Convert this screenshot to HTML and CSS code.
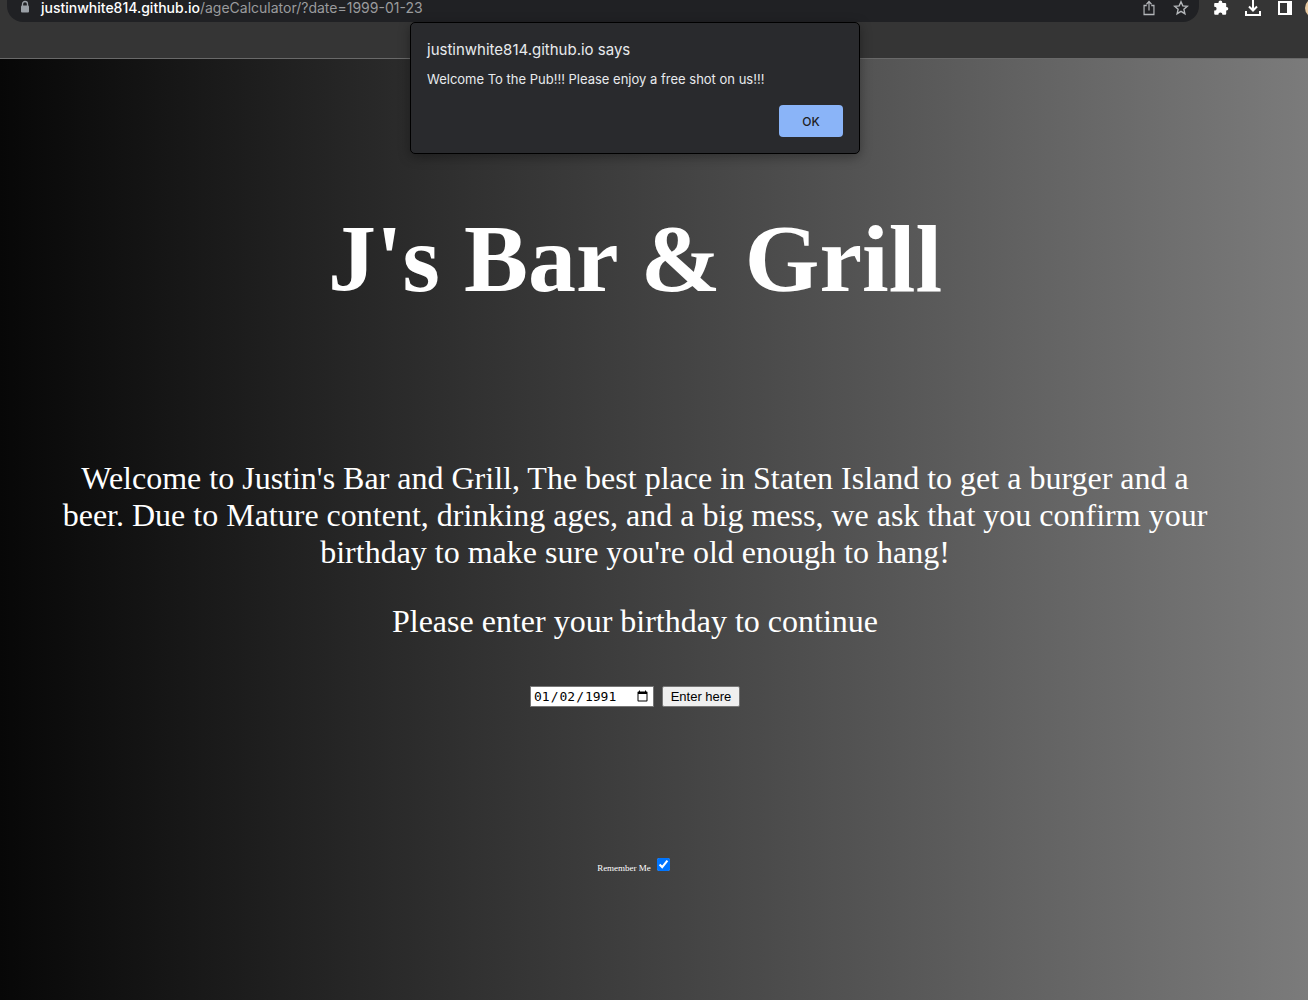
FILE: index.html
```html
<!DOCTYPE html>
<html lang="en">
<head>
<meta charset="utf-8">
<title>J's Bar &amp; Grill</title>
<link rel="stylesheet" href="styles.css">
</head>
<body>
<header class="toolbar">
  <div class="address">
    <svg class="lock" viewBox="0 0 10 14" aria-hidden="true"><path d="M2.5 6V4a2.5 2.5 0 0 1 5 0v2" fill="none" stroke="#9aa0a6" stroke-width="1.3"/><rect x="1" y="5.5" width="8" height="7" rx="1" fill="#9aa0a6"/></svg>
    <span class="url"><span class="host">justinwhite814.github.io</span>/ageCalculator/?date=1999-01-23</span>
    <button class="tool" aria-label="Share"><svg viewBox="0 0 16 16" fill="none" stroke="#b4b7ba" stroke-width="1.3"><path d="M5.5 5.5h-3v9h11v-9h-3M8 10.5V2M5.2 4.3 8 1.5l2.8 2.8" transform="translate(.8)scale(.9 1)"/></svg></button>
    <button class="tool" aria-label="Bookmark"><svg viewBox="0 0 16 16" fill="none" stroke="#b4b7ba" stroke-width="1.4"><path d="m8 1.8 1.8 4.1 4.5.4-3.4 3 1 4.4L8 11.4l-3.9 2.3 1-4.4-3.4-3 4.5-.4z"/></svg></button>
  </div>
  <button class="tool" aria-label="Extensions"><svg viewBox="0 0 16 16" fill="#fff"><path d="M2 3h3.5v-.6a1.9 1.9 0 0 1 3.8 0V3h2.9a1 1 0 0 1 1 1v3h.3a1.8 1.8 0 0 1 0 3.6h-.3v3.2a1 1 0 0 1-1 1H9.4v-.4a2 2 0 0 0-4 0v.4H2.2a1 1 0 0 1-1-1v-3.2h.5a1.9 1.9 0 0 0 0-3.8h-.5V4a1 1 0 0 1 .8-1z"/></svg></button>
  <button class="tool" aria-label="Downloads"><svg viewBox="0 0 16 16" fill="none" stroke="#fff" stroke-width="2"><path d="M8 0v10M4 6.5l4 4 4-4M1 11v4h14v-4"/></svg></button>
  <button class="tool" aria-label="Side panel"><svg viewBox="0 0 16 16"><path d="M1 1h14v14H1zM3 3v10h7V3z" fill="#fff" fill-rule="evenodd"/></svg></button>
  <span class="avatar"></span>
</header>
<main class="page">
  <h1>J's Bar &amp; Grill</h1>
  <p class="intro">Welcome to Justin's Bar and Grill, The best place in Staten Island to get a burger and a beer. Due to Mature content, drinking ages, and a big mess, we ask that you confirm your birthday to make sure you're old enough to hang!</p>
  <form>
    <label class="prompt" for="date">Please enter your birthday to continue</label>
    <div class="entry">
      <input class="date" type="date" id="date" value="1991-01-02">
      <button class="enter" type="button">Enter here</button>
    </div>
    <div class="remember">
      <label for="remember">Remember Me</label>
      <input type="checkbox" id="remember" checked>
    </div>
  </form>
</main>
<section class="dialog" role="alertdialog" aria-labelledby="dialog-title" aria-describedby="dialog-text">
  <h2 id="dialog-title">justinwhite814.github.io says</h2>
  <p id="dialog-text">Welcome To the Pub!!! Please enjoy a free shot on us!!!</p>
  <button class="ok">OK</button>
</section>
</body>
</html>
```
FILE: styles.css
```css
* { box-sizing: border-box; }
body {
  margin: 0;
  min-height: 100vh;
  display: flex;
  flex-direction: column;
  overflow-x: hidden;
  background: #353535;
  color: #fff;
  font-family: "Liberation Serif", "Times New Roman", serif;
}
h1, h2, p { margin: 0; font-weight: normal; }

.toolbar {
  height: 59px;
  flex: none;
  display: flex;
  align-items: flex-start;
  gap: 16px;
  padding-left: 7px;
  overflow: hidden;
  border-bottom: 1px solid #696969;
  font-family: Inter, Roboto, sans-serif;
}
.address {
  flex: 1;
  height: 22px;
  display: flex;
  align-items: flex-start;
  gap: 16px;
  padding: 0 10px 0 13px;
  border-radius: 0 0 16px 16px;
  background: #202124;
}
.lock { width: 10px; height: 14px; }
.url {
  flex: 1;
  margin-left: -5px;
  color: #9a9b9d;
  font-size: 14px;
  line-height: 16px;
  white-space: nowrap;
}
.host { color: #fff; font-weight: 500; }
.tool {
  width: 16px;
  height: 16px;
  padding: 0;
  border: 0;
  background: none;
}
.tool svg { display: block; width: 16px; height: 16px; }
.address + .tool { margin-left: -2px; }
.avatar {
  flex: none;
  width: 20px;
  height: 20px;
  margin: -2px -17px 0 -4px;
  border-radius: 50%;
  background: #e8c9a0;
}

.page {
  flex: 1;
  padding: 142px 98px 120px 60px;
  background: linear-gradient(to right, #070707, #7b7b7b);
  text-align: center;
  font-size: 32px;
  line-height: 37px;
}
.page h1 {
  font-size: 96px;
  line-height: 115px;
  font-weight: bold;
}
.intro { margin-top: 144px; }
.prompt { display: block; margin-top: 32px; }
.entry {
  display: flex;
  justify-content: center;
  gap: 8px;
  margin-top: 46px;
}
.date {
  width: 124px;
  height: 21px;
  padding: 0 2px;
  border: 1px solid #767676;
  background: #fff;
  color: #000;
  font: 13px "DejaVu Sans Mono", monospace;
}
.enter {
  width: 78px;
  height: 21px;
  padding: 0;
  border: 1px solid #767676;
  border-radius: 2px;
  background: #efefef;
  color: #000;
  font: 13px "Liberation Sans", Arial, sans-serif;
}
.remember {
  display: flex;
  justify-content: center;
  gap: 6px;
  padding-right: 3px;
  margin-top: 150px;
  font-size: 9px;
  line-height: 22px;
}
.remember input { width: 13px; height: 13px; margin: 1px 0; accent-color: #0075ff; }

/* Alert lies over both the toolbar and the page */
.dialog {
  position: absolute;
  top: 22px;
  left: 50%;
  width: 450px;
  margin-left: -244px;
  padding: 17px 16px 16px;
  display: flex;
  flex-direction: column;
  border: 1px solid #000;
  border-radius: 5px;
  background: #292a2d;
  color: #e8eaed;
  box-shadow: 0 3px 12px rgba(0, 0, 0, .35);
  font-family: Inter, Roboto, sans-serif;
}
.dialog h2 { font-size: 15px; line-height: 20px; }
.dialog p { margin-top: 10px; font-size: 13px; line-height: 18px; }
.ok {
  align-self: flex-end;
  width: 64px;
  height: 32px;
  margin-top: 17px;
  border: 0;
  border-radius: 4px;
  background: #8ab4f8;
  color: #202124;
  font: 500 12px Inter, Roboto, sans-serif;
}
```
